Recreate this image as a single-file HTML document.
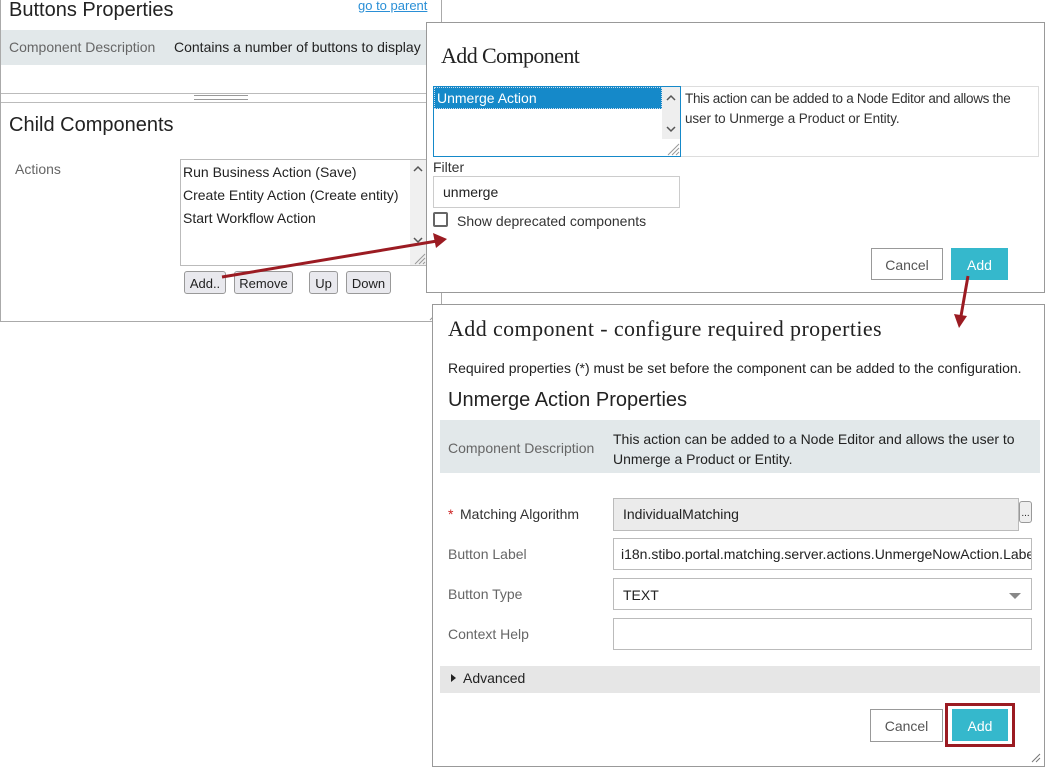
<!DOCTYPE html>
<html><head><style>
*{box-sizing:border-box;margin:0;padding:0}
body{width:1045px;height:767px;background:#fff;position:relative;overflow:hidden;font-family:"Liberation Sans",sans-serif;color:#222;font-size:14px}
.a{position:absolute}
.serif{font-family:"Liberation Serif",serif}
.btn{position:absolute;border:1px solid #999;border-radius:3px;background:#e9e9ee;font-size:13px;text-align:center;line-height:23px}
.inp{position:absolute;border:1px solid #bbb;background:#fff;font-size:14px;padding-left:9px}
.lbl{position:absolute;color:#666;font-size:14px}
</style></head><body>
<!-- panel 1 -->
<div class="a" style="left:0;top:0;width:442px;height:322px;border:1px solid #aaa;border-top:none"></div>
<div class="a" style="left:9px;top:-1px;font-size:20px;color:#222">Buttons Properties</div>
<div class="a" style="left:358px;top:-2px;font-size:13px;color:#2a8fd6;text-decoration:underline">go to parent</div>
<div class="a" style="left:1px;top:30px;width:427px;height:35px;background:#e2e8ea"></div>
<div class="a" style="left:9px;top:39px;color:#666">Component Description</div>
<div class="a" style="left:174px;top:39px;color:#222">Contains a number of buttons to display</div>
<div class="a" style="left:1px;top:93px;width:427px;height:10px;border-top:1px solid #bbb;border-bottom:1px solid #bbb"></div>
<div class="a" style="left:194px;top:95px;width:54px;height:5px;border-top:1px solid #999;border-bottom:1px solid #999"></div>
<div class="a" style="left:9px;top:114px;font-size:20px">Child Components</div>
<div class="lbl" style="left:15px;top:161px">Actions</div>
<div class="a" style="left:180px;top:159px;width:247px;height:107px;border:1px solid #bbb;background:#fff;font-size:14px;line-height:23px;padding:1px 2px">Run Business Action (Save)<br>Create Entity Action (Create entity)<br>Start Workflow Action</div>
<div class="a" style="left:410px;top:160px;width:16px;height:105px;background:#f0f0f0"></div>
<svg class="a" style="left:410px;top:160px" width="17" height="106">
<path d="M4 11 L8 7 L12 11" stroke="#555" stroke-width="1.5" fill="none"/>
<path d="M4 78 L8 82 L12 78" stroke="#555" stroke-width="1.5" fill="none"/>
<path d="M5 104 L15 94 M9 104 L15 98 M13 104 L15 102" stroke="#999" stroke-width="1"/>
</svg>
<div class="btn" style="left:184px;top:271px;width:42px;height:23px">Add..</div>
<div class="btn" style="left:234px;top:271px;width:59px;height:23px">Remove</div>
<div class="btn" style="left:309px;top:271px;width:29px;height:23px">Up</div>
<div class="btn" style="left:346px;top:271px;width:45px;height:23px">Down</div>
<svg class="a" style="left:428px;top:310px" width="12" height="12"><path d="M2 10 L10 2 M6 10 L10 6" stroke="#999"/></svg>

<!-- dialog 2 -->
<div class="a" style="left:426px;top:22px;width:619px;height:271px;border:1px solid #999;background:#fff"></div>
<div class="a serif" style="left:441px;top:43px;font-size:22px;letter-spacing:-0.6px">Add Component</div>
<div class="a" style="left:680px;top:86px;width:359px;height:71px;border:1px solid #ddd"></div>
<div class="a" style="left:685px;top:91px;color:#333;font-size:13.5px;white-space:nowrap;letter-spacing:-0.3px">This action can be added to a Node Editor and allows the</div>
<div class="a" style="left:685px;top:111px;color:#333;font-size:13.5px;white-space:nowrap;letter-spacing:-0.1px">user to Unmerge a Product or Entity.</div>
<div class="a" style="left:433px;top:86px;width:248px;height:71px;border:1px solid #1589c9;background:#fff"></div>
<div class="a" style="left:434px;top:87px;width:228px;height:22px;background:#1589c9;color:#fff;padding:2px 2px;border:1px dotted #cde">Unmerge Action</div>
<div class="a" style="left:662px;top:87px;width:18px;height:52px;background:#eee"></div>
<svg class="a" style="left:662px;top:87px" width="19" height="69">
<path d="M5 13 L9 9 L13 13" stroke="#555" stroke-width="1.5" fill="none"/>
<path d="M5 40 L9 44 L13 40" stroke="#555" stroke-width="1.5" fill="none"/>
<path d="M6 68 L17 57 M10 68 L17 61 M14 68 L17 65" stroke="#999" stroke-width="1"/>
</svg>
<div class="a" style="left:433px;top:159px;color:#333">Filter</div>
<div class="inp" style="left:433px;top:176px;width:247px;height:32px;line-height:30px;border-color:#ccc">unmerge</div>
<div class="a" style="left:433px;top:212px;width:15px;height:15px;border:2px solid #666;border-radius:2px"></div>
<div class="a" style="left:457px;top:213px;color:#333">Show deprecated components</div>
<div class="a" style="left:871px;top:248px;width:72px;height:32px;border:1px solid #999;text-align:center;line-height:32px;color:#555">Cancel</div>
<div class="a" style="left:951px;top:248px;width:57px;height:32px;background:#35b8cc;text-align:center;line-height:34px;color:#fff">Add</div>

<!-- dialog 3 -->
<div class="a" style="left:432px;top:304px;width:613px;height:463px;border:1px solid #999;background:#fff"></div>
<div class="a serif" style="left:448px;top:316px;font-size:22px;letter-spacing:0.4px">Add component - configure required properties</div>
<div class="a" style="left:448px;top:360px;color:#222">Required properties (*) must be set before the component can be added to the configuration.</div>
<div class="a" style="left:448px;top:389px;font-size:20px">Unmerge Action Properties</div>
<div class="a" style="left:440px;top:420px;width:600px;height:53px;background:#e2e8ea"></div>
<div class="lbl" style="left:448px;top:440px">Component Description</div>
<div class="a" style="left:613px;top:429px;line-height:20px;color:#222;font-size:14px">This action can be added to a Node Editor and allows the user to<br>Unmerge a Product or Entity.</div>
<div class="a" style="left:448px;top:506px;color:#c22">*</div>
<div class="a" style="left:460px;top:506px;color:#333">Matching Algorithm</div>
<div class="inp" style="left:613px;top:498px;width:406px;height:33px;line-height:31px;background:#ebebeb;border-color:#bbb">IndividualMatching</div>
<div class="a" style="left:1019px;top:501px;width:13px;height:22px;border:1px solid #999;border-radius:3px;background:#eee;font-size:10px;text-align:center;line-height:24px">...</div>
<div class="lbl" style="left:448px;top:546px">Button Label</div>
<div class="inp" style="left:613px;top:538px;width:419px;height:32px;line-height:30px;overflow:hidden;white-space:nowrap;padding-left:7px">i18n.stibo.portal.matching.server.actions.UnmergeNowAction.Label</div>
<div class="lbl" style="left:448px;top:586px">Button Type</div>
<div class="inp" style="left:613px;top:578px;width:419px;height:32px;line-height:32px">TEXT</div>
<div class="a" style="left:1009px;top:593px;border-left:6px solid transparent;border-right:6px solid transparent;border-top:6px solid #888"></div>
<div class="lbl" style="left:448px;top:626px">Context Help</div>
<div class="inp" style="left:613px;top:618px;width:419px;height:32px"></div>
<div class="a" style="left:440px;top:666px;width:600px;height:27px;background:#e6e6e6"></div>
<div class="a" style="left:451px;top:674px;border-top:4px solid transparent;border-bottom:4px solid transparent;border-left:5px solid #222"></div>
<div class="a" style="left:463px;top:670px;color:#222">Advanced</div>
<div class="a" style="left:870px;top:709px;width:73px;height:33px;border:1px solid #999;text-align:center;line-height:33px;color:#555">Cancel</div>
<div class="a" style="left:945px;top:703px;width:70px;height:44px;border:3px solid #9b1b22"></div>
<div class="a" style="left:952px;top:709px;width:56px;height:32px;background:#35b8cc;text-align:center;line-height:34px;color:#fff">Add</div>
<svg class="a" style="left:1030px;top:752px" width="12" height="12"><path d="M2 10 L10 2 M6 10 L10 6" stroke="#777"/></svg>

<!-- arrows -->
<svg class="a" style="left:0;top:0" width="1045" height="767">
<line x1="222" y1="277" x2="437" y2="241" stroke="#9b1b22" stroke-width="3"/>
<polygon points="447,239 433,233 436,248" fill="#9b1b22"/>
<line x1="968" y1="276" x2="961" y2="316" stroke="#9b1b22" stroke-width="3"/>
<polygon points="959,328 954,314 967,316" fill="#9b1b22"/>
</svg>
</body></html>
